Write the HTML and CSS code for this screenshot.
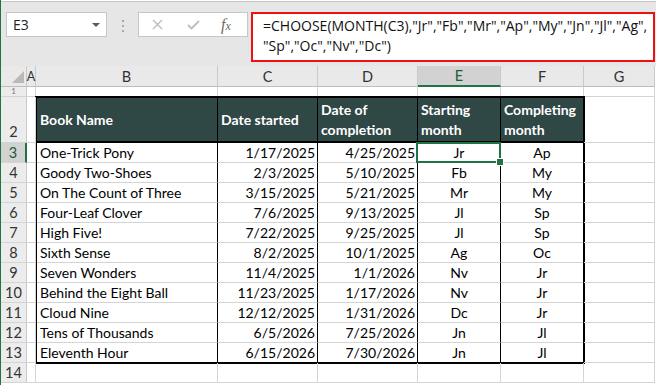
FILE: index.html
```html
<!DOCTYPE html>
<html>
<head>
<meta charset="utf-8">
<link rel="stylesheet" href="styles.css">
</head>
<body>
<div class="app">
  <div class="toolbar">
    <div class="namebox"><span class="ref">E3</span><span class="caret"></span></div>
    <div class="grip"><i></i><i></i><i></i></div>
    <div class="fxbtns">
      <svg class="ico" width="11" height="11" viewBox="0 0 11 11"><path d="M1 1 L10 10 M10 1 L1 10" stroke="#bdbdbd" stroke-width="1.4" fill="none"/></svg>
      <svg class="ico" width="13" height="10" viewBox="0 0 13 10"><path d="M1 5 L4.5 8.5 L12 1" stroke="#bdbdbd" stroke-width="1.8" fill="none"/></svg>
      <span class="fx"><i>f</i><span class="x">x</span></span>
    </div>
    <div class="formula">=CHOOSE(MONTH(C3),"Jr","Fb","Mr","Ap","My","Jn","Jl","Ag",<br>"Sp","Oc","Nv","Dc")</div>
  </div>

  <div class="sheet">
    <div class="ch corner"><span class="tri"></span></div>
    <div class="ch cola">A</div>
    <div class="ch">B</div>
    <div class="ch">C</div>
    <div class="ch">D</div>
    <div class="ch sel">E</div>
    <div class="ch">F</div>
    <div class="ch">G</div>

    <div class="rh short">1</div><div class="c"></div><div class="c"></div><div class="c"></div><div class="c"></div><div class="c"></div><div class="c"></div><div class="c"></div>

    <div class="tbl">
      <div class="th">Book Name</div>
      <div class="th">Date started</div>
      <div class="th">Date of<br>completion</div>
      <div class="th">Starting<br>month</div>
      <div class="th last">Completing<br>month</div>

      <div class="td">One-Trick Pony</div><div class="td r">1/17/2025</div><div class="td r">4/25/2025</div><div class="td m active">Jr</div><div class="td m last">Ap</div>
      <div class="td">Goody Two-Shoes</div><div class="td r">2/3/2025</div><div class="td r">5/10/2025</div><div class="td m">Fb</div><div class="td m last">My</div>
      <div class="td">On The Count of Three</div><div class="td r">3/15/2025</div><div class="td r">5/21/2025</div><div class="td m">Mr</div><div class="td m last">My</div>
      <div class="td">Four-Leaf Clover</div><div class="td r">7/6/2025</div><div class="td r">9/13/2025</div><div class="td m">Jl</div><div class="td m last">Sp</div>
      <div class="td">High Five!</div><div class="td r">7/22/2025</div><div class="td r">9/25/2025</div><div class="td m">Jl</div><div class="td m last">Sp</div>
      <div class="td">Sixth Sense</div><div class="td r">8/2/2025</div><div class="td r">10/1/2025</div><div class="td m">Ag</div><div class="td m last">Oc</div>
      <div class="td">Seven Wonders</div><div class="td r">11/4/2025</div><div class="td r">1/1/2026</div><div class="td m">Nv</div><div class="td m last">Jr</div>
      <div class="td">Behind the Eight Ball</div><div class="td r">11/23/2025</div><div class="td r">1/17/2026</div><div class="td m">Nv</div><div class="td m last">Jr</div>
      <div class="td">Cloud Nine</div><div class="td r">12/12/2025</div><div class="td r">1/31/2026</div><div class="td m">Dc</div><div class="td m last">Jr</div>
      <div class="td">Tens of Thousands</div><div class="td r">6/5/2026</div><div class="td r">7/25/2026</div><div class="td m">Jn</div><div class="td m last">Jl</div>
      <div class="td end">Eleventh Hour</div><div class="td r end">6/15/2026</div><div class="td r end">7/30/2026</div><div class="td m end">Jn</div><div class="td m last end">Jl</div>
    </div>

    <div class="rh tall">2</div><div class="c"></div><div class="c"></div>
    <div class="rh sel">3</div><div class="c"></div><div class="c"></div>
    <div class="rh">4</div><div class="c"></div><div class="c"></div>
    <div class="rh">5</div><div class="c"></div><div class="c"></div>
    <div class="rh">6</div><div class="c"></div><div class="c"></div>
    <div class="rh">7</div><div class="c"></div><div class="c"></div>
    <div class="rh">8</div><div class="c"></div><div class="c"></div>
    <div class="rh">9</div><div class="c"></div><div class="c"></div>
    <div class="rh">10</div><div class="c"></div><div class="c"></div>
    <div class="rh">11</div><div class="c"></div><div class="c"></div>
    <div class="rh">12</div><div class="c"></div><div class="c"></div>
    <div class="rh">13</div><div class="c"></div><div class="c"></div>

    <div class="rh">14</div><div class="c"></div><div class="c"></div><div class="c"></div><div class="c"></div><div class="c"></div><div class="c"></div><div class="c"></div>
  </div>
</div>
</body>
</html>
```

FILE: styles.css
```css
* { box-sizing: border-box; }
html, body { margin: 0; padding: 0; }
body {
  width: 656px;
  height: 385px;
  overflow: hidden;
  background: #ffffff;
  font-family: Lato, "Liberation Sans", sans-serif;
}
.app {
  border-left: 1px solid #217346;
  height: 385px;
  background: #ffffff;
  padding-top: 1px;
}
.toolbar {
  height: 65px;
  background: #e6e6e6;
  border-top: 1px solid #c6c6c6;
  display: flex;
  align-items: flex-start;
  padding-top: 10px;
  padding-left: 5px;
}
.namebox {
  width: 101px;
  height: 25px;
  background: #ffffff;
  border: 1px solid #c6c6c6;
  display: flex;
  align-items: center;
  justify-content: space-between;
  padding: 0 6px 0 6px;
}
.ref {
  font-family: "Open Sans", "Noto Sans", sans-serif;
  font-size: 14px;
  color: #222;
}
.caret {
  width: 0;
  height: 0;
  border-left: 4px solid transparent;
  border-right: 4px solid transparent;
  border-top: 4px solid #5a5a5a;
}
.grip {
  width: 2px;
  margin: 8px 14px 0 15px;
  display: flex;
  flex-direction: column;
  gap: 3px;
}
.grip i {
  display: block;
  width: 2px;
  height: 2px;
  background: #a8a8a8;
}
.fxbtns {
  width: 110px;
  height: 25px;
  background: #ffffff;
  border: 1px solid #c6c6c6;
  display: flex;
  align-items: center;
  padding-left: 13px;
}
.fxbtns .ico:first-child { margin-right: 24px; }
.fxbtns .ico:nth-child(2) { margin-right: 21px; }
.fx {
  font-family: "Liberation Serif", serif;
  font-style: italic;
  color: #6b6b6b;
  font-size: 16px;
  line-height: 1;
}
.fx i { font-style: italic; }
.fx .x { font-size: 12px; }
.formula {
  margin-left: 3px;
  width: 404px;
  height: 50px;
  background: #ffffff;
  border: 2px solid #ee1111;
  padding: 2px 0 0 10px;
  font-family: "Open Sans", "Noto Sans", sans-serif;
  font-size: 14px;
  line-height: 20px;
  color: #111;
  white-space: nowrap;
  overflow: hidden;
}

.sheet {
  display: grid;
  grid-template-columns: 26px 9px 182px 100px 100px 83px 83px 71px;
  grid-template-rows: 21px 10px 46px repeat(12, 20px);
  font-size: 14px;
}
.ch {
  background: #e9e9e9;
  border-right: 1px solid #c9c9c9;
  border-bottom: 1px solid #bdbdbd;
  display: flex;
  align-items: center;
  justify-content: center;
  color: #333;
  font-size: 14.5px;
  overflow: hidden;
}
.ch.cola { font-size: 12.5px; padding: 0; overflow: visible; }
.ch.sel {
  background: #d2d2d2;
  border-bottom: 2px solid #217346;
  color: #1d5c38;
}
.corner {
  align-items: flex-end;
  justify-content: flex-end;
  padding: 0 2px 3px 0;
}
.tri {
  width: 0;
  height: 0;
  border-left: 12px solid transparent;
  border-bottom: 12px solid #b9b9b9;
}
.rh {
  background: #ececec;
  border-right: 1px solid #c9c9c9;
  border-bottom: 1px solid #d4d4d4;
  display: flex;
  align-items: center;
  justify-content: center;
  color: #333;
  font-size: 14.5px;
  line-height: 20px;
  overflow: hidden;
}
.rh.short { font-size: 8px; line-height: 9px; color: #777; }
.rh.tall { align-items: flex-end; }
.rh.sel {
  background: #d2d2d2;
  border-right: 2px solid #217346;
  color: #1d5c38;
}
.c {
  border-right: 1px solid #d4d4d4;
  border-bottom: 1px solid #d4d4d4;
}

.tbl {
  grid-column: 3 / 8;
  grid-row: 3 / 15;
  margin: -1px -1px -1px -1px;
  border: 2px solid #000;
  display: grid;
  grid-template-columns: 181px 100px 100px 83px 82px;
  grid-template-rows: 45px repeat(10, 20px) 19px;
  background: #fff;
  font-size: 14px;
  color: #000;
}
.th {
  background: #2f4745;
  color: #fff;
  font-weight: bold;
  border-right: 1px solid #000;
  border-bottom: 2px solid #000;
  display: flex;
  align-items: center;
  padding-left: 3px;
  line-height: 20px;
}
.td {
  border-right: 1px solid #000;
  border-bottom: 1px solid #d4d4d4;
  display: flex;
  align-items: center;
  padding-left: 3px;
  line-height: 19px;
  white-space: nowrap;
}
.td.r { justify-content: flex-end; padding: 0 2px 0 0; }
.td.m { justify-content: center; padding: 0; }
.th.last, .td.last { border-right: none; }
.td.end { border-bottom: none; }
.td.active { position: relative; }
.td.active::after {
  content: "";
  position: absolute;
  top: -1px;
  left: -2px;
  right: -1px;
  bottom: -1px;
  border: 2px solid #217346;
}
.td.active::before {
  content: "";
  position: absolute;
  right: -4px;
  bottom: -4px;
  width: 6px;
  height: 6px;
  background: #217346;
  border: 1px solid #fff;
  z-index: 2;
}
```
